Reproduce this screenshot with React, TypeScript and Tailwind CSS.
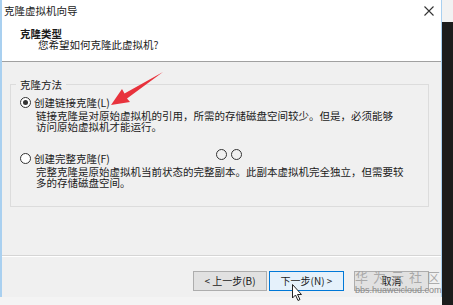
import React from "react";

const font = { fontFamily: '"Noto Sans CJK SC", "Noto Sans", sans-serif' };

function Radio({ checked }: { checked?: boolean }) {
  return (
    <span className="w-[11px] h-[11px] rounded-full border border-[#333] bg-white flex items-center justify-center shrink-0">
      {checked && <span className="w-[5px] h-[5px] rounded-full bg-[#333]" />}
    </span>
  );
}

export default function App() {
  return (
    <div className="w-[453px] h-[305px] flex bg-[#f4f4f4] overflow-hidden relative text-[#1a1a1a]" style={font}>
      <div className="w-[442px] h-[297px] flex flex-col border-l-2 border-r border-[#a9d0f0] bg-[#f0f0f0]">
        {/* title bar */}
        <div className="h-[22px] bg-white flex items-center justify-between pl-[2px] pr-[6px]">
          <span className="text-[10.5px] leading-[22px]">克隆虚拟机向导</span>
          <svg width="10" height="10" viewBox="0 0 10 10" className="mr-[1px]">
            <path d="M0.5 0.5 L9.5 9.5 M9.5 0.5 L0.5 9.5" stroke="#333" strokeWidth="1.1" />
          </svg>
        </div>
        {/* header */}
        <div className="h-[40px] bg-white border-b border-[#a0a0a0] pt-[6px]">
          <div className="pl-[18px] text-[10.5px] leading-[11px] font-bold">克隆类型</div>
          <div className="pl-[36px] text-[10.5px] leading-[11px]">您希望如何克隆此虚拟机?</div>
        </div>
        {/* body */}
        <div className="flex-1 flex flex-col">
          <fieldset className="relative ml-[8px] w-[419px] mt-[17px] border border-[#dcdcdc] pb-[18px]">
            <legend className="ml-[5px] px-[4px] text-[10.5px] leading-[11px]">克隆方法</legend>
            <div className="flex items-center gap-[3px] pl-[9px] mt-[7px]">
              <Radio checked />
              <span className="text-[10.5px] leading-[11px]">创建链接克隆(L)</span>
            </div>
            <div className="pl-[25px] mt-[2px] text-[10.5px] leading-[11px]">
              <div>链接克隆是对原始虚拟机的引用，所需的存储磁盘空间较少。但是，必须能够</div>
              <div>访问原始虚拟机才能运行。</div>
            </div>
            <div className="flex items-center gap-[3px] pl-[9px] mt-[21px]">
              <Radio />
              <span className="text-[10.5px] leading-[11px]">创建完整克隆(F)</span>
            </div>
            <div className="pl-[25px] mt-[2px] text-[10.5px] leading-[11px]">
              <div>完整克隆是原始虚拟机当前状态的完整副本。此副本虚拟机完全独立，但需要较</div>
              <div>多的存储磁盘空间。</div>
            </div>
            <div className="absolute left-[205px] top-[59px] flex gap-[4px]">
              <span className="w-[11px] h-[11px] rounded-full border border-[#333]" />
              <span className="w-[11px] h-[11px] rounded-full border border-[#333]" />
            </div>
          </fieldset>
          <div className="mt-[48px] border-t border-[#d5d5d5] border-b-white border-b" />
          <div className="flex justify-end pr-[12px] mt-[14px]">
            <button className="w-[74px] h-[20px] border border-[#adadad] bg-[#e1e1e1] text-[10px] leading-[18px] text-[#1a1a1a]">
              &lt; 上一步(B)
            </button>
            <button className="ml-[2px] w-[75px] h-[20px] border border-[#0078d7] bg-[#e5f1fb] text-[10px] leading-[18px] text-[#1a1a1a]">
              下一步(N) &gt;
            </button>
            <button className="ml-[10px] w-[75px] h-[20px] border border-[#adadad] bg-[#e1e1e1] text-[10px] leading-[18px] text-[#1a1a1a]">
              取消
            </button>
          </div>
        </div>
      </div>
      <div className="flex-1 flex flex-col">
        <div className="h-[22px] bg-[#f2f2f2]" />
        <div className="flex-1 bg-[#1c1c1c]" />
      </div>

      {/* red arrow annotation */}
      <svg className="absolute left-0 top-0" width="453" height="305">
        <polygon points="111,105 122,89 124.5,93.5 163,72 127,98.5 130,102" fill="#e8323c" />
      </svg>

      {/* watermark */}
      <div className="absolute left-[355px] top-[269px] w-[95px] flex flex-col items-start whitespace-nowrap">
        <span className="text-[13px] leading-[16px] tracking-[5px] text-[#9a9a9a]/80">华为云社区</span>
        <span className="text-[9px] leading-[11px] text-[#8a8a8a]" style={{ fontFamily: '"Liberation Sans", sans-serif' }}>bbs.huaweicloud.com</span>
      </div>

      {/* mouse cursor */}
      <svg className="absolute left-[292px] top-[284px]" width="12" height="18" viewBox="0 0 12 18">
        <path d="M0.5 0.5 L0.5 14 L3.5 11 L6 16.5 L8 15.5 L5.5 10.5 L9.5 10.5 Z" fill="white" stroke="#222" strokeWidth="1" />
      </svg>
    </div>
  );
}
